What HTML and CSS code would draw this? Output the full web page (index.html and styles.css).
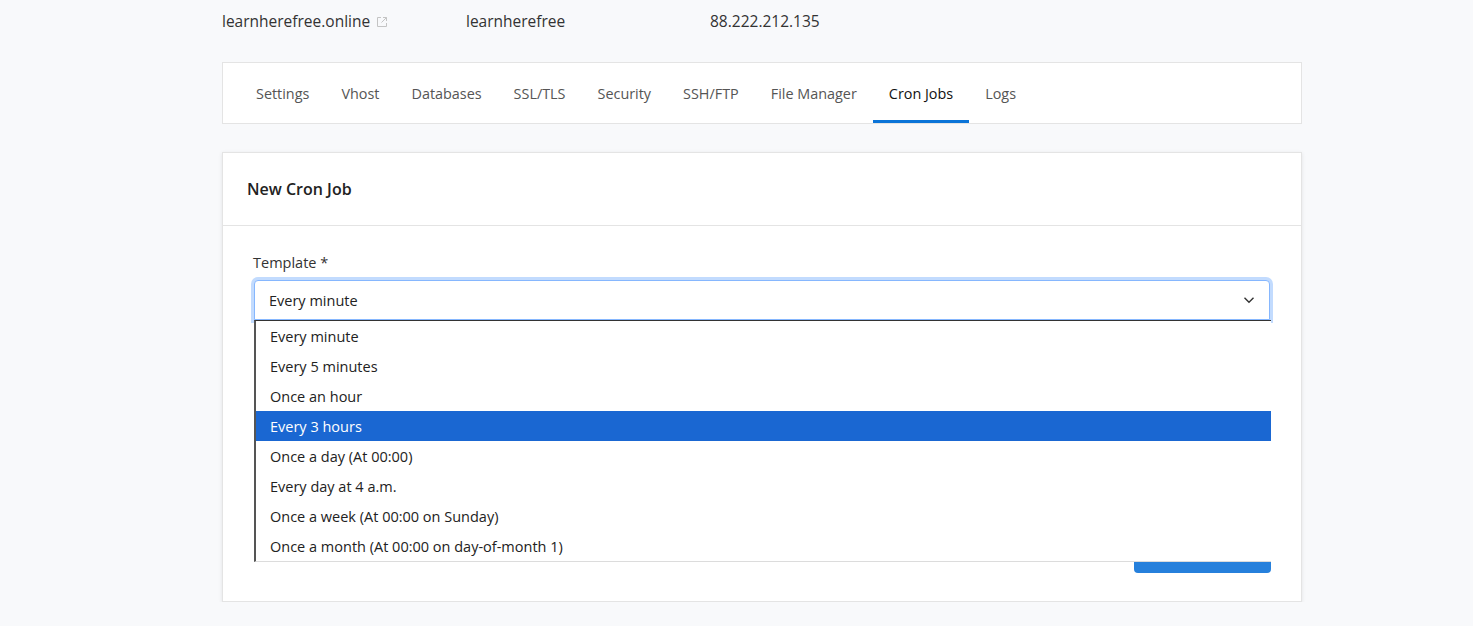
FILE: index.html
```html
<!DOCTYPE html>
<html lang="en">
<head>
<meta charset="utf-8">
<title>Cron Jobs</title>
<link rel="stylesheet" href="styles.css">
</head>
<body>
<main class="page">
  <section class="site-info">
    <div class="info-item">
      <div class="info-label">Domain</div>
      <div class="info-value">learnherefree.online
        <svg class="ext-icon" width="12" height="12" viewBox="0 0 12 12" aria-hidden="true">
          <path d="M5 1.5H1.5v9h9V7" fill="none" stroke="#c4c4c4" stroke-width="1"/>
          <path d="M7 1.5h3.5V5M10.5 1.5L5.5 6.5" fill="none" stroke="#c4c4c4" stroke-width="1"/>
        </svg>
      </div>
    </div>
    <div class="info-item">
      <div class="info-label">Site User</div>
      <div class="info-value">learnherefree</div>
    </div>
    <div class="info-item">
      <div class="info-label">IP Address</div>
      <div class="info-value">88.222.212.135</div>
    </div>
  </section>

  <nav class="tabs">
    <a class="tab">Settings</a>
    <a class="tab">Vhost</a>
    <a class="tab">Databases</a>
    <a class="tab">SSL/TLS</a>
    <a class="tab">Security</a>
    <a class="tab">SSH/FTP</a>
    <a class="tab">File Manager</a>
    <a class="tab active">Cron Jobs</a>
    <a class="tab">Logs</a>
  </nav>

  <section class="card">
    <header class="card-header">
      <h2 class="card-title">New Cron Job</h2>
    </header>
    <div class="card-body">
      <div class="field">
        <label class="field-label">Template *</label>
        <div class="select-wrap">
          <div class="select">
            <span>Every minute</span>
            <svg class="chevron" width="12" height="8" viewBox="0 0 12 8" aria-hidden="true">
              <path d="M1.5 1.75L6 6.25l4.5-4.5" fill="none" stroke="#333" stroke-width="1.4"/>
            </svg>
          </div>
          <ul class="dropdown">
            <li class="option">Every minute</li>
            <li class="option">Every 5 minutes</li>
            <li class="option">Once an hour</li>
            <li class="option selected">Every 3 hours</li>
            <li class="option">Once a day (At 00:00)</li>
            <li class="option">Every day at 4 a.m.</li>
            <li class="option">Once a week (At 00:00 on Sunday)</li>
            <li class="option">Once a month (At 00:00 on day-of-month 1)</li>
          </ul>
        </div>
      </div>
      <div class="actions">
        <button class="btn-primary">Create</button>
      </div>
    </div>
  </section>
</main>
</body>
</html>
```

FILE: styles.css
```css
* { box-sizing: border-box; }
html, body { margin: 0; padding: 0; }
body {
  background: #f8f9fb;
  font-family: "Open Sans", "Noto Sans", sans-serif;
  color: #333;
  font-size: 14.5px;
}
.page {
  width: 1080px;
  margin-left: 222px;
}
.site-info {
  display: grid;
  grid-template-columns: 244px 244px 244px;
  margin-top: -16px;
}
.info-label {
  font-size: 13px;
  line-height: 18px;
  color: #999;
}
.info-value {
  font-size: 15.5px;
  line-height: 22px;
  color: #333;
  margin-top: 8px;
  display: flex;
  align-items: center;
  gap: 6px;
}
.ext-icon { margin-top: 2px; }
.tabs {
  margin-top: 30px;
  height: 62px;
  background: #fff;
  border: 1px solid #e4e4e4;
  display: flex;
  padding-left: 17px;
}
.tab {
  display: flex;
  align-items: center;
  padding: 3px 16px 0;
  color: #555;
  font-size: 14.4px;
  border-bottom: 3px solid transparent;
}
.tab.active {
  color: #111;
  border-bottom-color: #0b74d8;
}
.card {
  margin-top: 28px;
  background: #fff;
  border: 1px solid #e4e4e4;
  box-shadow: 0 1px 4px rgba(0,0,0,0.09);
  height: 450px;
  display: flex;
  flex-direction: column;
}
.card-header {
  height: 73px;
  border-bottom: 1px solid #e4e4e4;
  display: flex;
  align-items: center;
  padding-left: 24px;
}
.card-title {
  margin: 0;
  font-size: 16px;
  font-weight: 600;
  color: #222;
}
.card-body {
  flex: 1;
  padding: 26px 30px 28px 30px;
  display: flex;
  flex-direction: column;
  justify-content: space-between;
}
.field-label {
  display: block;
  font-size: 14.5px;
  line-height: 22px;
  color: #333;
  margin-bottom: 6px;
}
.select-wrap {
  position: relative;
  padding: 0 1px;
}
.select {
  height: 40px;
  border: 1px solid #86b7fe;
  border-radius: 4px 4px 0 0;
  box-shadow: 0 0 0 3px rgba(13,110,253,0.25);
  display: flex;
  align-items: center;
  justify-content: space-between;
  padding: 0 14px 0 14px;
  color: #222;
  background: #fff;
}
.dropdown {
  position: absolute;
  left: 1px;
  right: 0;
  top: 40px;
  margin: 0;
  padding: 0;
  list-style: none;
  background: #fff;
  border-top: 1px solid #333;
  border-left: 2px solid #555;
  border-bottom: 1px solid #dcdcdc;
  z-index: 5;
}
.option {
  height: 30px;
  padding-top: 1px;
  line-height: 29px;
  padding-left: 14px;
  color: #222;
  font-size: 14.5px;
}
.option.selected {
  background: #1a67d2;
  color: #fff;
}
.actions {
  display: flex;
  justify-content: flex-end;
}
.btn-primary {
  width: 137px;
  height: 38px;
  background: #2680dc;
  color: #fff;
  border: 0;
  border-radius: 4px;
  font-family: inherit;
  font-size: 15px;
}
```
